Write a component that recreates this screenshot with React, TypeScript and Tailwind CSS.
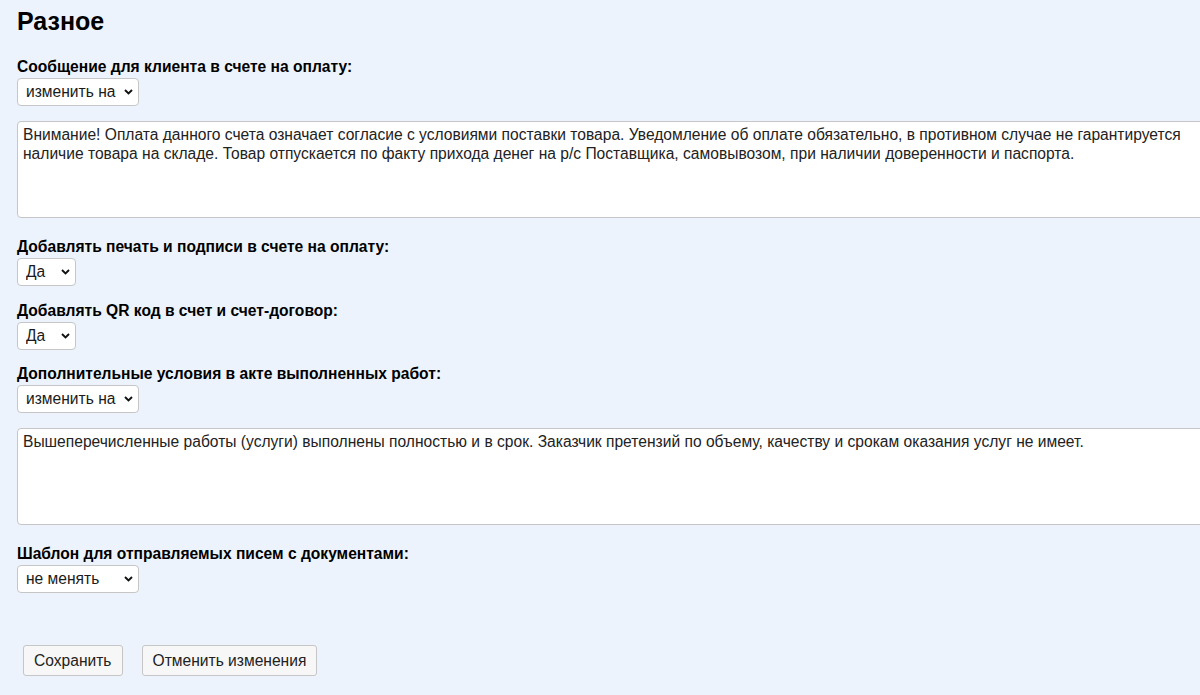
import React from "react";

function Chevron() {
  return (
    <svg width="9" height="6" viewBox="0 0 9 6" className="pointer-events-none absolute right-[6px] top-1/2 -translate-y-1/2">
      <path d="M1 1 L4.5 4.5 L8 1" fill="none" stroke="#111" strokeWidth="1.9" />
    </svg>
  );
}

function Select({ value, width }: { value: string; width: string }) {
  return (
    <div className={`relative ${width} h-[28px]`}>
      <select
        defaultValue={value}
        className="h-full w-full appearance-none rounded-[4px] border border-[#c6c6c6] bg-white pl-[8px] pr-[20px] text-[15.6px] text-[#1a1a1a] outline-none"
      >
        <option>{value}</option>
      </select>
      <Chevron />
    </div>
  );
}

function Label({ children }: { children: React.ReactNode }) {
  return <div className="text-[15.6px] font-bold leading-[18px] text-black">{children}</div>;
}

function Area({ text }: { text: string }) {
  return (
    <textarea
      defaultValue={text}
      className="mt-[15px] block h-[97px] w-[1200px] resize-none rounded-[4px] border border-[#c6c6c6] bg-white px-[5px] py-[3px] text-[15.6px] leading-[19px] text-[#222] outline-none"
    />
  );
}

export default function App() {
  return (
    <div
      className="h-[695px] w-[1200px] overflow-hidden bg-[#edf3fc] pl-[17px] pt-[6px]"
      style={{ fontFamily: '"Liberation Sans", Arial, sans-serif' }}
    >
      <h1 className="text-[25px] font-bold leading-[30px] text-black">Разное</h1>

      <div className="mt-[22px]">
        <Label>Сообщение для клиента в счете на оплату:</Label>
        <div className="mt-[2px]">
          <Select value="изменить на" width="w-[122px]" />
        </div>
        <Area text="Внимание! Оплата данного счета означает согласие с условиями поставки товара. Уведомление об оплате обязательно, в противном случае не гарантируется наличие товара на складе. Товар отпускается по факту прихода денег на р/с Поставщика, самовывозом, при наличии доверенности и паспорта." />
      </div>

      <div className="mt-[20px]">
        <Label>Добавлять печать и подписи в счете на оплату:</Label>
        <div className="mt-[2px]">
          <Select value="Да" width="w-[59px]" />
        </div>
      </div>

      <div className="mt-[16px]">
        <Label>Добавлять QR код в счет и счет-договор:</Label>
        <div className="mt-[2px]">
          <Select value="Да" width="w-[59px]" />
        </div>
      </div>

      <div className="mt-[15px]">
        <Label>Дополнительные условия в акте выполненных работ:</Label>
        <div className="mt-[2px]">
          <Select value="изменить на" width="w-[122px]" />
        </div>
        <Area text="Вышеперечисленные работы (услуги) выполнены полностью и в срок. Заказчик претензий по объему, качеству и срокам оказания услуг не имеет." />
      </div>

      <div className="mt-[20px]">
        <Label>Шаблон для отправляемых писем с документами:</Label>
        <div className="mt-[2px]">
          <Select value="не менять" width="w-[122px]" />
        </div>
      </div>

      <div className="mt-[52px] flex gap-[19px] pl-[6px]">
        <button className="h-[31px] rounded-[3px] border border-[#c6c6c6] bg-[#f7f7f7] px-[10px] text-[15.6px] text-[#222]">
          Сохранить
        </button>
        <button className="h-[31px] rounded-[3px] border border-[#c6c6c6] bg-[#f7f7f7] px-[10px] text-[15.6px] text-[#222]">
          Отменить изменения
        </button>
      </div>
    </div>
  );
}
